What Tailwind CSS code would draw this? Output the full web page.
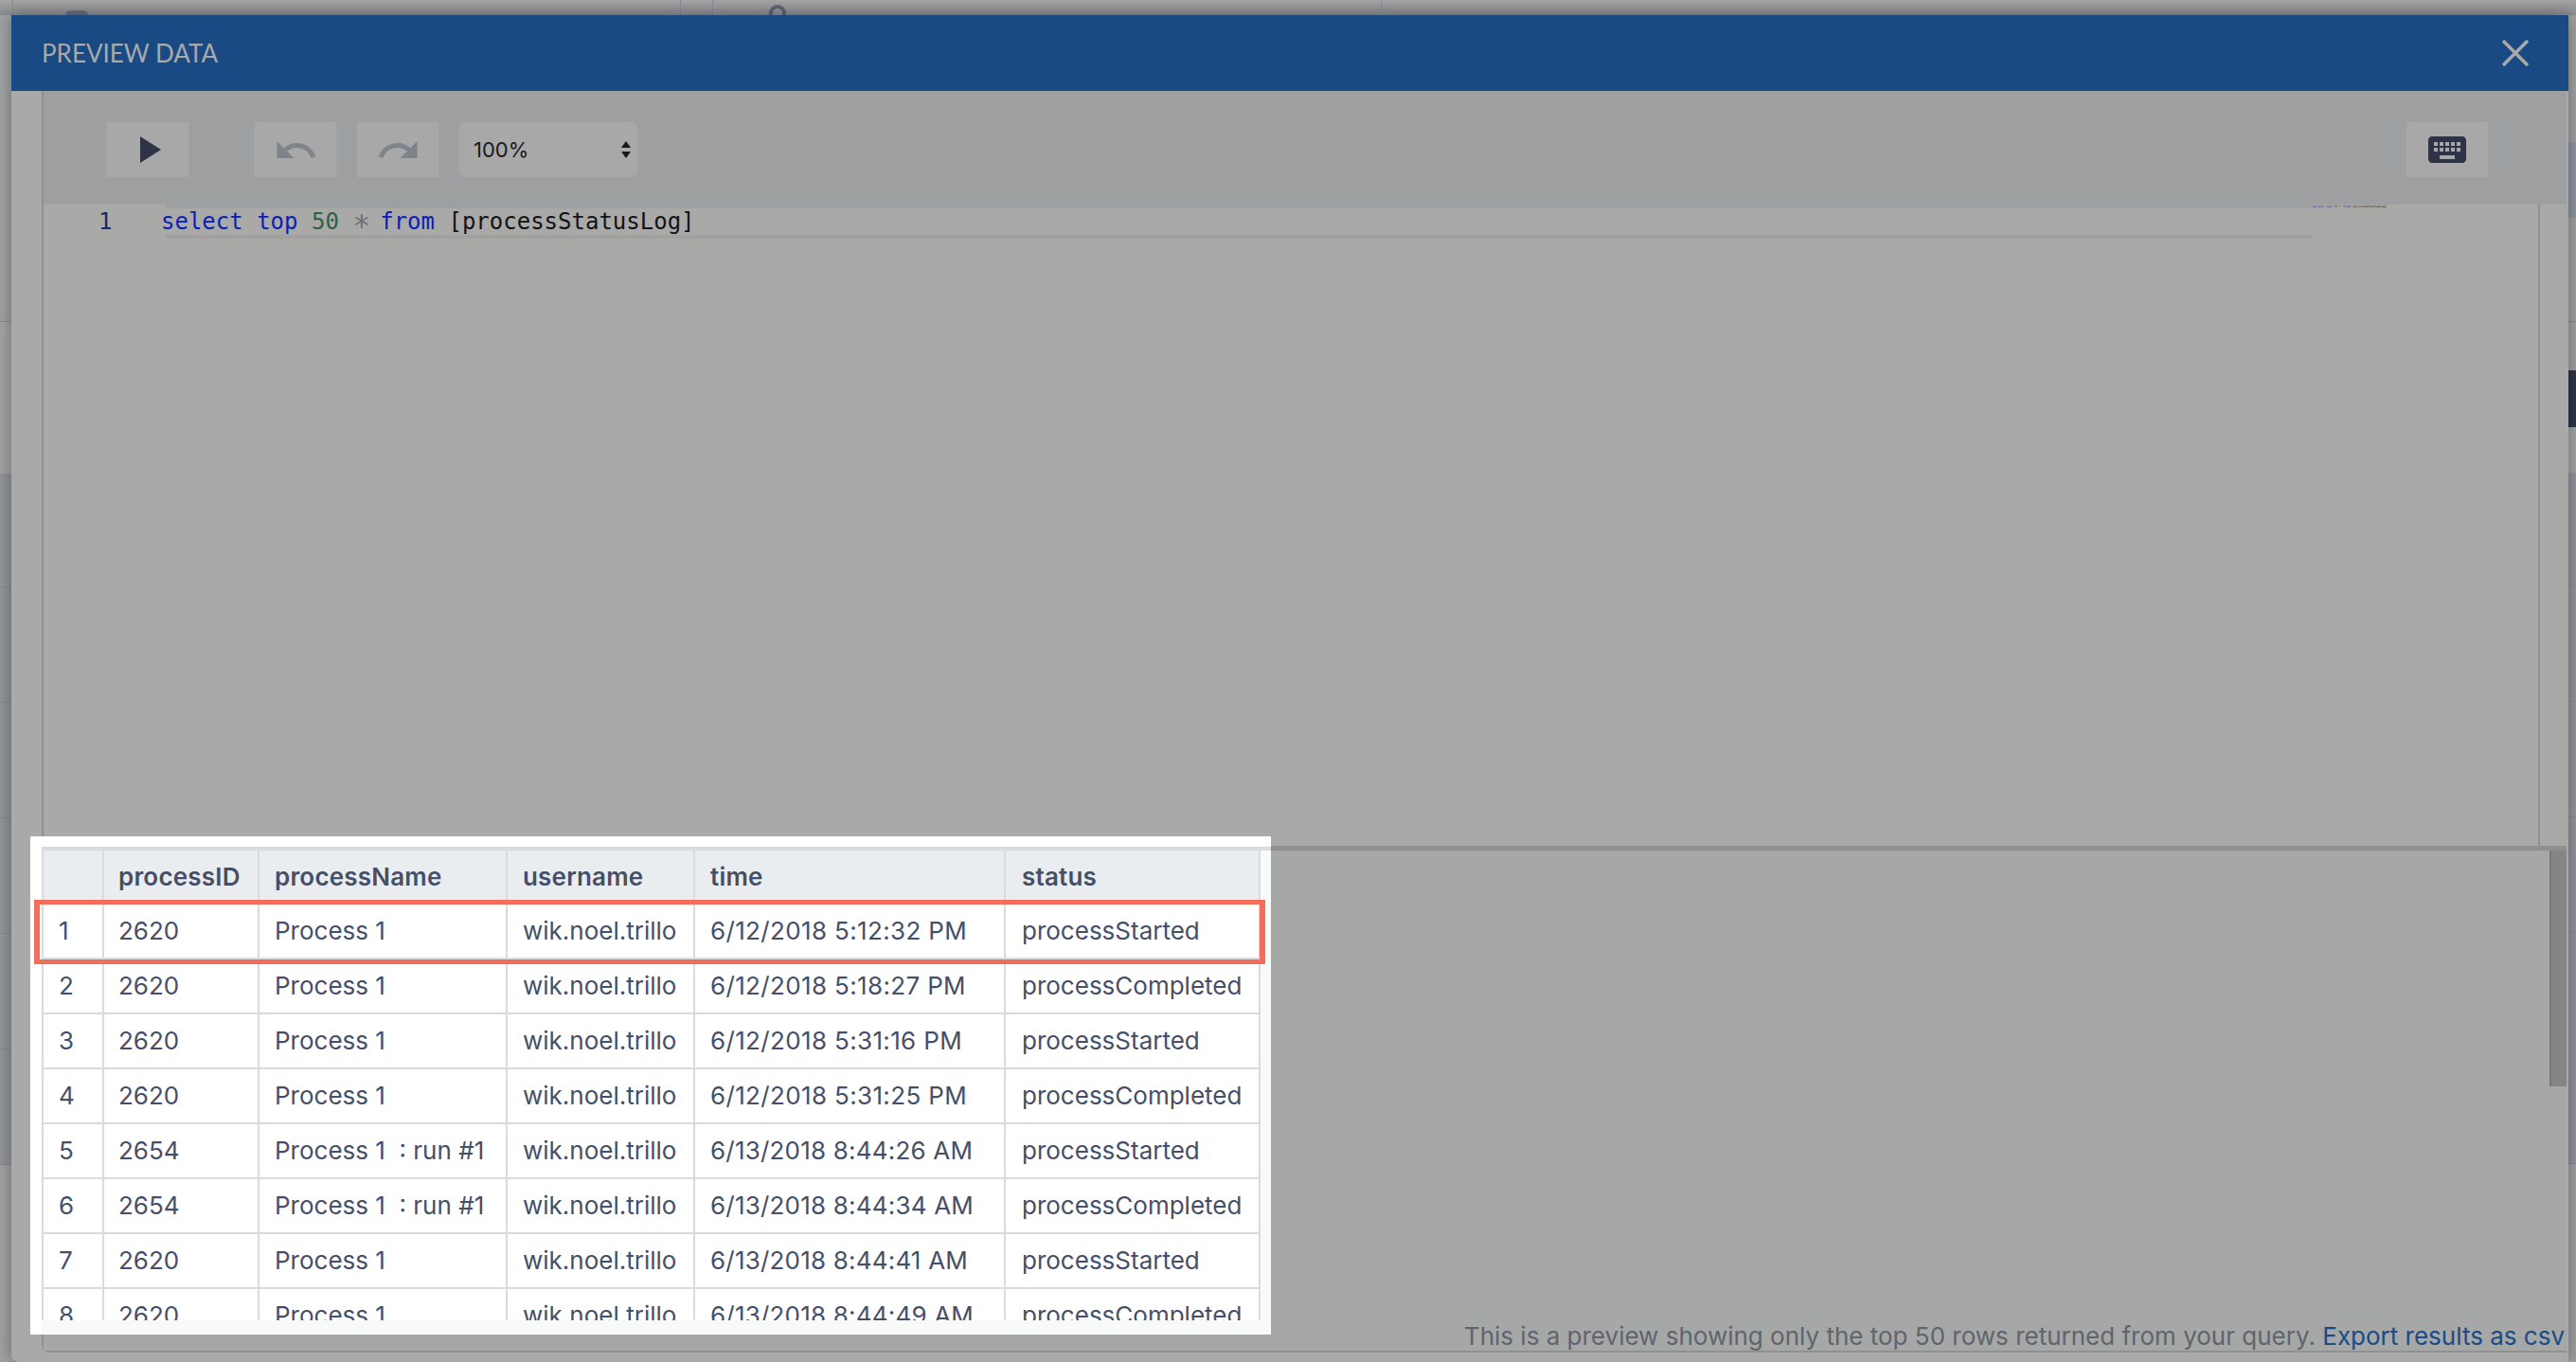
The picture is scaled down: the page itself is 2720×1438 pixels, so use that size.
<!DOCTYPE html>
<html lang="en">
<head>
<meta charset="utf-8">
<title>Preview Data</title>
<script src="https://cdn.jsdelivr.net/npm/@tailwindcss/browser@4"></script>
</head>
<body class="m-0 overflow-hidden bg-[#a3a4a6] font-['Inter',sans-serif]">
<div class="relative flex h-[1438px] w-[2720px] flex-col overflow-hidden">

  <!-- page behind the dialog, top edge -->
  <div class="relative flex h-[16px] shrink-0 bg-gradient-to-b from-[#a5a5a6] to-[#8b8c8e]">
    <div class="ml-[13px] h-[16px] border-l border-dashed border-[#7f8592]"></div>
    <div class="ml-[55px] mt-[11px] h-[5px] w-[24px] rounded-t-lg bg-[#6b7080]"></div>
    <div class="ml-[625px] h-[16px] border-l border-dashed border-[#7f8592]"></div>
    <div class="ml-[33px] h-[16px] border-l border-dashed border-[#7f8592]"></div>
    <div class="ml-[59px] mt-[5px] h-[11px] w-[18px] rounded-t-full border-[4px] border-b-0 border-[#5d6478]"></div>
    <div class="ml-[628px] h-[16px] border-l border-dashed border-[#7f8592]"></div>
  </div>

  <div class="flex min-h-0 flex-1">
    <!-- page behind the dialog, left edge -->
    <div class="flex w-[12px] shrink-0 flex-col bg-[#a0a1a3]">
      <div class="h-[324px] border-b border-[#868a92]"></div>
      <div class="h-[160px] bg-[#a3a4a6]"></div>
      <div class="h-[120px] border-b border-[#868a92] bg-[#92959b]"></div>
      <div class="h-[122px] border-b border-[#868a92] bg-[#92959b]"></div>
      <div class="h-[122px] border-b border-[#868a92] bg-[#92959b]"></div>
      <div class="h-[122px] border-b border-[#868a92] bg-[#92959b]"></div>
      <div class="h-[122px] border-b border-[#868a92] bg-[#92959b]"></div>
      <div class="h-[122px] border-b border-[#868a92] bg-[#92959b]"></div>
      <div class="flex-1 bg-[#a0a1a3]"></div>
    </div>

    <!-- dialog -->
    <div class="relative z-10 flex w-[2700px] shrink-0 flex-col rounded-bl-lg bg-[#a9a9a9] shadow-[0_0_18px_rgba(0,0,0,0.35)]">
      <div class="flex h-[80px] shrink-0 items-center justify-between bg-[#1a4a84] pl-[32px] pr-[42px]">
        <span class="font-['Lato',sans-serif] text-[26px] leading-none text-[#a9a9a9]">PREVIEW DATA</span>
        <svg width="28" height="28" viewBox="0 0 28 28" fill="none" stroke="#a9a9a9" stroke-width="3.5"><path d="M1 1 27 27M27 1 1 27"/></svg>
      </div>

      <div class="ml-[32px] mr-[2px] mb-[10px] flex min-h-0 flex-1 flex-col rounded-bl-lg border-b-2 border-l-2 border-[#8f9090]">
        <!-- toolbar -->
        <div class="flex h-[120px] shrink-0 items-center bg-[#9e9fa1] pl-[66px] pr-[82px] pt-[4px]">
          <button class="flex h-[60px] w-[88px] items-center justify-center rounded-[2px] border border-[#a2a2a2] bg-[#a8a8a8] pl-[6px]">
            <svg width="22" height="28" viewBox="0 0 22 28"><path d="M0 0 22 14 0 28Z" fill="#2e3446"/></svg>
          </button>
          <button class="ml-[68px] flex h-[60px] w-[88px] items-center justify-center rounded-[2px] border border-[#a2a2a2] bg-[#a8a8a8]">
            <svg width="41" height="18" viewBox="2 7 20.1 9"><path fill="#7f848b" d="M12.5 8c-2.65 0-5.05.99-6.9 2.6L2 7v9h9l-3.62-3.62c1.39-1.16 3.16-1.88 5.12-1.88 3.54 0 6.55 2.31 7.6 5.5l2.37-.78C21.08 11.03 17.15 8 12.5 8z"/></svg>
          </button>
          <button class="ml-[20px] flex h-[60px] w-[88px] items-center justify-center rounded-[2px] border border-[#a2a2a2] bg-[#a8a8a8]">
            <svg width="41" height="18" viewBox="1.9 7 20.1 9"><path fill="#7f848b" d="M18.4 10.6C16.55 8.99 14.15 8 11.5 8c-4.65 0-8.58 3.03-9.96 7.22L3.9 16c1.05-3.19 4.05-5.5 7.6-5.5 1.95 0 3.73.72 5.12 1.88L13 16h9V7l-3.6 3.6z"/></svg>
          </button>
          <div class="ml-[20px] flex h-[60px] w-[190px] items-center justify-between rounded-[8px] border border-[#a2a2a2] bg-[#a8a8a8] pl-[15px] pr-[7px]">
            <span class="text-[22px] leading-none text-[#17181b]">100%</span>
            <svg width="10" height="18" viewBox="0 0 10 18" fill="#17181b"><path d="M5 0 10 7H0ZM5 18 0 11H10Z"/></svg>
          </div>
          <button class="ml-auto flex h-[60px] w-[88px] items-center justify-center rounded-[2px] border border-[#a2a2a2] bg-[#a8a8a8]">
            <svg width="40" height="28" viewBox="2 5 20 14"><path fill="#2e3446" d="M20 5H4c-1.1 0-1.99.9-1.99 2L2 17c0 1.1.9 2 2 2h16c1.1 0 2-.9 2-2V7c0-1.1-.9-2-2-2zm-9 3h2v2h-2V8zm0 3h2v2h-2v-2zM8 8h2v2H8V8zm0 3h2v2H8v-2zm-1 2H5v-2h2v2zm0-3H5V8h2v2zm9 7H8v-2h8v2zm0-4h-2v-2h2v2zm0-3h-2V8h2v2zm3 3h-2v-2h2v2zm0-3h-2V8h2v2z"/></svg>
          </button>
        </div>

        <!-- editor -->
        <div class="flex h-[677px] shrink-0 bg-[#a9a9a7] font-['DejaVu_Sans_Mono',monospace]">
          <div class="w-[124px] shrink-0 pl-[58px] pt-[4px] text-[24px] leading-[28px] text-[#0f2a6a]">1</div>
          <div class="w-[2272px] shrink-0">
            <div class="ml-[4px] h-[36px] border-y-4 border-b-[#a1a1a0] border-t-[#9e9fa1]">
              <div class="-ml-[4px] whitespace-pre text-[24px] leading-[28px] text-[#111318]"><span class="text-[#0a1fb5]">select top</span> <span class="text-[#2f6246]">50</span> <span class="inline-block w-[14.45px] translate-y-[7px] text-center text-[32px] leading-[0] text-[#6d7075]">*</span> <span class="text-[#0a1fb5]">from</span> [processStatusLog]</div>
            </div>
          </div>
          <div class="w-[240px] shrink-0 border-r-2 border-[#909090]">
            <div class="h-[4px] whitespace-pre text-[3.33px] leading-[4px] text-[#222]"><span class="text-[#0a1fb5]">select top</span> <span class="text-[#2f6246]">50</span> * <span class="text-[#0a1fb5]">from</span> [processStatusLog]</div>
          </div>
          <div class="flex-1"></div>
        </div>

        <!-- results panel -->
        <div class="relative flex min-h-0 flex-1 items-end justify-end border-t-[5px] border-[#8f9090] bg-[#a6a8a7] pr-[2px]">
          <div class="absolute right-0 top-0 h-[249px] w-[18px] border-l-2 border-[#777878] bg-[#858585]"></div>
          <p class="-mb-[2px] whitespace-nowrap text-[26px] leading-[34px] text-[#5f646d]">This is a preview showing only the top 50 rows returned from your query. <a class="text-[#1c4a85]">Export results as csv</a></p>
        </div>
      </div>

      <!-- highlighted results table laid over the dialog -->
      <div class="absolute left-[20px] top-[867px] flex h-[526px] w-[1310px] flex-col bg-white pl-[12px] pt-[11px] text-[26px] leading-[34px] text-[#454f68]">
        <div class="flex min-h-0 flex-1 flex-col overflow-hidden border-t-4 border-[#d8dbdf] bg-[#f8f9f9]">
          <div class="w-[1287px] border-l-2 border-[#d8dbdf]">
            <div class="grid h-[57px] grid-cols-[64px_164px_262px_198px_328px_269px] bg-[#eaedf0] font-semibold tracking-[0.2px]">
              <div class="border-b-2 border-r-2 border-[#d8dbdf]"></div>
              <div class="flex items-center border-b-2 border-r-2 border-[#d8dbdf] pl-[15px]">processID</div>
              <div class="flex items-center border-b-2 border-r-2 border-[#d8dbdf] pl-[16px]">processName</div>
              <div class="flex items-center border-b-2 border-r-2 border-[#d8dbdf] pl-[16px]">username</div>
              <div class="flex items-center border-b-2 border-r-2 border-[#d8dbdf] pl-[16px]">time</div>
              <div class="flex items-center border-b-2 border-r-2 border-[#d8dbdf] pl-[17px]">status</div>
            </div>
            <div class="grid h-[58px] grid-cols-[64px_164px_262px_198px_328px_269px] bg-white">
              <div class="flex items-center border-b-2 border-r-2 border-[#d8dbdf] pl-[16px]">1</div>
              <div class="flex items-center border-b-2 border-r-2 border-[#d8dbdf] pl-[15px]">2620</div>
              <div class="flex items-center border-b-2 border-r-2 border-[#d8dbdf] pl-[16px]">Process 1</div>
              <div class="flex items-center border-b-2 border-r-2 border-[#d8dbdf] pl-[16px]">wik.noel.trillo</div>
              <div class="flex items-center border-b-2 border-r-2 border-[#d8dbdf] pl-[16px] tracking-[0.35px]">6/12/2018 5:12:32 PM</div>
              <div class="flex items-center border-b-2 border-r-2 border-[#d8dbdf] pl-[17px]">processStarted</div>
            </div>
            <div class="grid h-[58px] grid-cols-[64px_164px_262px_198px_328px_269px] bg-white">
              <div class="flex items-center border-b-2 border-r-2 border-[#d8dbdf] pl-[16px]">2</div>
              <div class="flex items-center border-b-2 border-r-2 border-[#d8dbdf] pl-[15px]">2620</div>
              <div class="flex items-center border-b-2 border-r-2 border-[#d8dbdf] pl-[16px]">Process 1</div>
              <div class="flex items-center border-b-2 border-r-2 border-[#d8dbdf] pl-[16px]">wik.noel.trillo</div>
              <div class="flex items-center border-b-2 border-r-2 border-[#d8dbdf] pl-[16px] tracking-[0.35px]">6/12/2018 5:18:27 PM</div>
              <div class="flex items-center border-b-2 border-r-2 border-[#d8dbdf] pl-[17px]">processCompleted</div>
            </div>
            <div class="grid h-[58px] grid-cols-[64px_164px_262px_198px_328px_269px] bg-white">
              <div class="flex items-center border-b-2 border-r-2 border-[#d8dbdf] pl-[16px]">3</div>
              <div class="flex items-center border-b-2 border-r-2 border-[#d8dbdf] pl-[15px]">2620</div>
              <div class="flex items-center border-b-2 border-r-2 border-[#d8dbdf] pl-[16px]">Process 1</div>
              <div class="flex items-center border-b-2 border-r-2 border-[#d8dbdf] pl-[16px]">wik.noel.trillo</div>
              <div class="flex items-center border-b-2 border-r-2 border-[#d8dbdf] pl-[16px] tracking-[0.35px]">6/12/2018 5:31:16 PM</div>
              <div class="flex items-center border-b-2 border-r-2 border-[#d8dbdf] pl-[17px]">processStarted</div>
            </div>
            <div class="grid h-[58px] grid-cols-[64px_164px_262px_198px_328px_269px] bg-white">
              <div class="flex items-center border-b-2 border-r-2 border-[#d8dbdf] pl-[16px]">4</div>
              <div class="flex items-center border-b-2 border-r-2 border-[#d8dbdf] pl-[15px]">2620</div>
              <div class="flex items-center border-b-2 border-r-2 border-[#d8dbdf] pl-[16px]">Process 1</div>
              <div class="flex items-center border-b-2 border-r-2 border-[#d8dbdf] pl-[16px]">wik.noel.trillo</div>
              <div class="flex items-center border-b-2 border-r-2 border-[#d8dbdf] pl-[16px] tracking-[0.35px]">6/12/2018 5:31:25 PM</div>
              <div class="flex items-center border-b-2 border-r-2 border-[#d8dbdf] pl-[17px]">processCompleted</div>
            </div>
            <div class="grid h-[58px] grid-cols-[64px_164px_262px_198px_328px_269px] bg-white">
              <div class="flex items-center border-b-2 border-r-2 border-[#d8dbdf] pl-[16px]">5</div>
              <div class="flex items-center border-b-2 border-r-2 border-[#d8dbdf] pl-[15px]">2654</div>
              <div class="flex items-center whitespace-pre border-b-2 border-r-2 border-[#d8dbdf] pl-[16px]">Process 1  : run #1</div>
              <div class="flex items-center border-b-2 border-r-2 border-[#d8dbdf] pl-[16px]">wik.noel.trillo</div>
              <div class="flex items-center border-b-2 border-r-2 border-[#d8dbdf] pl-[16px] tracking-[0.2px]">6/13/2018 8:44:26 AM</div>
              <div class="flex items-center border-b-2 border-r-2 border-[#d8dbdf] pl-[17px]">processStarted</div>
            </div>
            <div class="grid h-[58px] grid-cols-[64px_164px_262px_198px_328px_269px] bg-white">
              <div class="flex items-center border-b-2 border-r-2 border-[#d8dbdf] pl-[16px]">6</div>
              <div class="flex items-center border-b-2 border-r-2 border-[#d8dbdf] pl-[15px]">2654</div>
              <div class="flex items-center whitespace-pre border-b-2 border-r-2 border-[#d8dbdf] pl-[16px]">Process 1  : run #1</div>
              <div class="flex items-center border-b-2 border-r-2 border-[#d8dbdf] pl-[16px]">wik.noel.trillo</div>
              <div class="flex items-center border-b-2 border-r-2 border-[#d8dbdf] pl-[16px] tracking-[0.2px]">6/13/2018 8:44:34 AM</div>
              <div class="flex items-center border-b-2 border-r-2 border-[#d8dbdf] pl-[17px]">processCompleted</div>
            </div>
            <div class="grid h-[58px] grid-cols-[64px_164px_262px_198px_328px_269px] bg-white">
              <div class="flex items-center border-b-2 border-r-2 border-[#d8dbdf] pl-[16px]">7</div>
              <div class="flex items-center border-b-2 border-r-2 border-[#d8dbdf] pl-[15px]">2620</div>
              <div class="flex items-center border-b-2 border-r-2 border-[#d8dbdf] pl-[16px]">Process 1</div>
              <div class="flex items-center border-b-2 border-r-2 border-[#d8dbdf] pl-[16px]">wik.noel.trillo</div>
              <div class="flex items-center border-b-2 border-r-2 border-[#d8dbdf] pl-[16px] tracking-[0.2px]">6/13/2018 8:44:41 AM</div>
              <div class="flex items-center border-b-2 border-r-2 border-[#d8dbdf] pl-[17px]">processStarted</div>
            </div>
            <div class="grid h-[58px] grid-cols-[64px_164px_262px_198px_328px_269px] bg-white">
              <div class="flex items-center border-b-2 border-r-2 border-[#d8dbdf] pl-[16px]">8</div>
              <div class="flex items-center border-b-2 border-r-2 border-[#d8dbdf] pl-[15px]">2620</div>
              <div class="flex items-center border-b-2 border-r-2 border-[#d8dbdf] pl-[16px]">Process 1</div>
              <div class="flex items-center border-b-2 border-r-2 border-[#d8dbdf] pl-[16px]">wik.noel.trillo</div>
              <div class="flex items-center border-b-2 border-r-2 border-[#d8dbdf] pl-[16px] tracking-[0.2px]">6/13/2018 8:44:49 AM</div>
              <div class="flex items-center border-b-2 border-r-2 border-[#d8dbdf] pl-[17px]">processCompleted</div>
            </div>
          </div>
        </div>
        <div class="h-[15px] shrink-0 bg-[#f8f9f9]"></div>
        <!-- red highlight around row one -->
        <div class="absolute left-[4px] top-[67px] h-[68px] w-[1300px] border-x-[6px] border-y-[5px] border-[#f26d5b]"></div>
      </div>
    </div>

    <!-- page behind the dialog, right edge -->
    <div class="flex w-[8px] shrink-0 flex-col bg-[#a0a1a3]">
      <div class="h-[134px]"></div>
      <div class="h-[80px] bg-[#8f94a0]"></div>
      <div class="h-[110px] border-b border-[#868a92]"></div>
      <div class="h-[51px]"></div>
      <div class="h-[60px] bg-[#2f3548]"></div>
      <div class="h-[48px] bg-[#a3a4a6]"></div>
      <div class="h-[120px] border-b border-[#868a92] bg-[#92959b]"></div>
      <div class="h-[122px] border-b border-[#868a92] bg-[#92959b]"></div>
      <div class="h-[122px] border-b border-[#868a92] bg-[#92959b]"></div>
      <div class="h-[122px] border-b border-[#868a92] bg-[#92959b]"></div>
      <div class="h-[122px] border-b border-[#868a92] bg-[#92959b]"></div>
      <div class="h-[122px] border-b border-[#868a92] bg-[#92959b]"></div>
      <div class="flex-1 bg-[#a0a1a3]"></div>
    </div>
  </div>
</div>
</body>
</html>
